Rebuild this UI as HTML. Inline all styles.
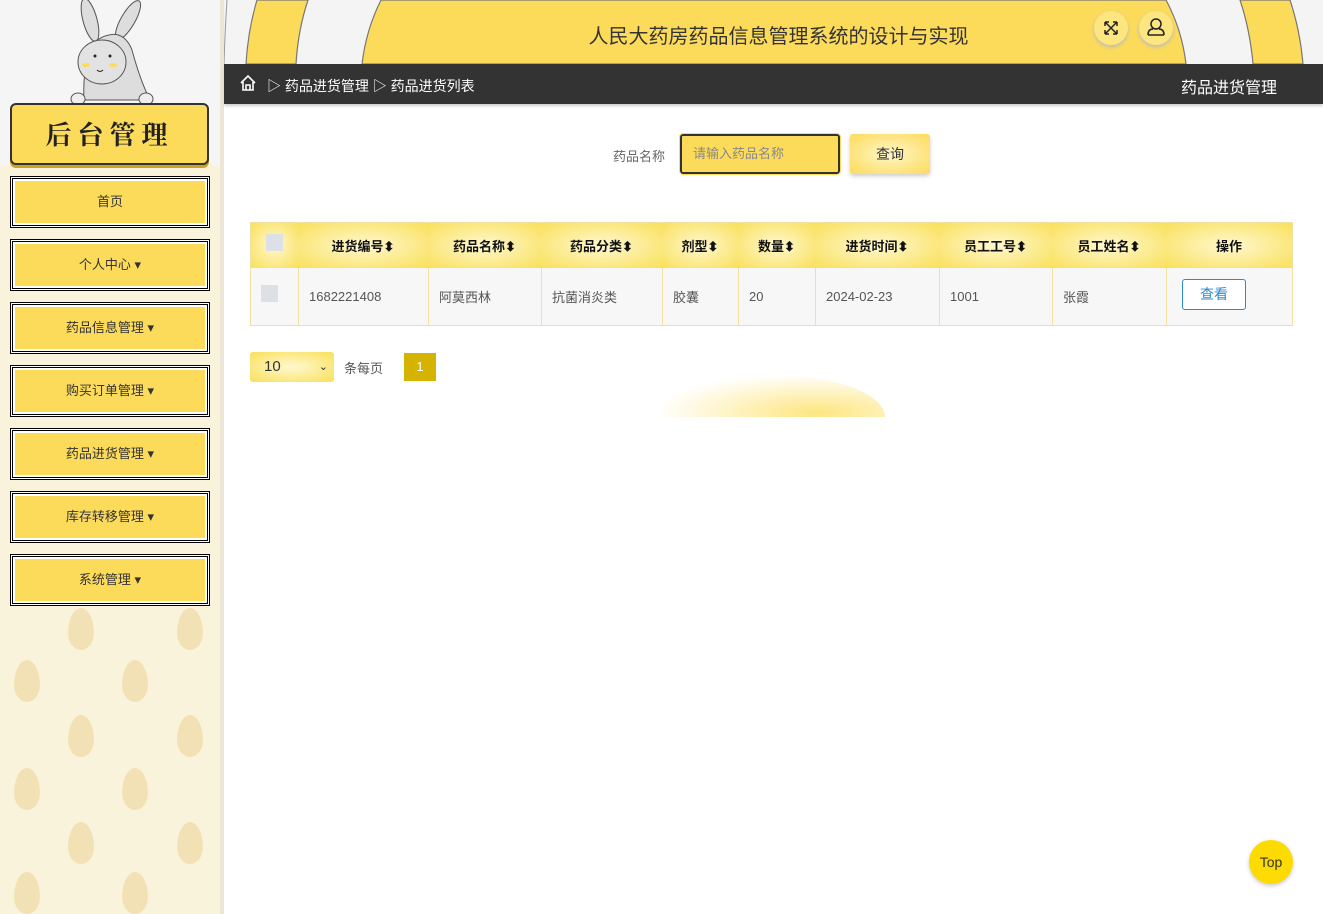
<!DOCTYPE html>
<html><head><meta charset="utf-8"><style>
*{box-sizing:border-box;margin:0;padding:0}
body{width:1323px;height:914px;overflow:hidden;background:#fff;font-family:"Liberation Sans","Noto Sans CJK SC",sans-serif;position:relative}
.side{position:absolute;left:0;top:0;width:220px;height:914px;background:#faf3dc;overflow:hidden}
.side .top{position:absolute;left:0;top:0;width:220px;height:166px;background:#f5f5f5}
.sbord{position:absolute;left:220px;top:0;width:4px;height:914px;background:#ebe6d6}
.leaf{position:absolute;width:26px;height:42px;border-radius:50% 50% 50% 50%/60% 60% 40% 40%;background:#f0dcaa;opacity:.8}
.sign{position:absolute;left:10px;top:103px;width:199px;height:62px;background:#fddb5a;border:2px solid #333;border-radius:6px;box-shadow:0 3px 0 #c9a227;text-align:center;font:bold 26px "Noto Serif CJK SC",serif;line-height:58px;letter-spacing:6px;color:#222}
.mi{position:absolute;left:10px;width:200px;height:52px;border:3px double #000;padding:2px;background:#fff}
.mi div{width:100%;height:100%;background:#fddb5a;text-align:center;line-height:42px;font-size:13px;color:#333}
.hdr{position:absolute;left:224px;top:0;width:1099px;height:64px;background:#f4f4f4;overflow:hidden}
.bar{position:absolute;left:224px;top:64px;width:1099px;height:40px;background:#333;color:#fff;font-size:14px;box-shadow:0 2px 3px #ccc}
.th,.td{position:absolute;top:0;height:100%;display:flex;align-items:center;font-size:13px}
.th{justify-content:center;font-weight:bold;color:#111}
.td{padding-left:10px;color:#555;border-left:1px solid #f0e1a0}
</style></head><body>
<div class="side">
<div class="top"></div>
<div class="leaf" style="left:68px;top:608px"></div><div class="leaf" style="left:177px;top:608px"></div>
<div class="leaf" style="left:14px;top:660px"></div><div class="leaf" style="left:122px;top:660px"></div>
<div class="leaf" style="left:68px;top:715px"></div><div class="leaf" style="left:177px;top:715px"></div>
<div class="leaf" style="left:14px;top:768px"></div><div class="leaf" style="left:122px;top:768px"></div>
<div class="leaf" style="left:68px;top:822px"></div><div class="leaf" style="left:177px;top:822px"></div>
<div class="leaf" style="left:14px;top:872px"></div><div class="leaf" style="left:122px;top:872px"></div>
<svg style="position:absolute;left:62px;top:0" width="100" height="110" viewBox="0 0 100 110">
<ellipse cx="28" cy="20" rx="7" ry="22" fill="#ddd" stroke="#555" transform="rotate(-15 28 20)"/>
<ellipse cx="66" cy="20" rx="7" ry="22" fill="#ddd" stroke="#555" transform="rotate(30 66 20)"/>
<path d="M22 100 Q20 60 35 40 Q60 25 70 50 Q78 80 88 100Z" fill="#ddd" stroke="#555"/>
<ellipse cx="40" cy="62" rx="24" ry="22" fill="#e2e2e2" stroke="#555"/>
<circle cx="33" cy="56" r="1.5" fill="#222"/><circle cx="48" cy="56" r="1.5" fill="#222"/>
<ellipse cx="24" cy="65" rx="4" ry="2" fill="#fddb5a"/><ellipse cx="51" cy="65" rx="4" ry="2" fill="#fddb5a"/>
<path d="M35 70 q3 3 6 0" stroke="#222" fill="none"/>
<ellipse cx="16" cy="99" rx="7" ry="6" fill="#eee" stroke="#555"/><ellipse cx="84" cy="99" rx="7" ry="6" fill="#eee" stroke="#555"/>
</svg>
<div class="sign">后台管理</div>
<div class="mi" style="top:176px"><div>首页</div></div>
<div class="mi" style="top:239px"><div>个人中心 ▾</div></div>
<div class="mi" style="top:302px"><div>药品信息管理 ▾</div></div>
<div class="mi" style="top:365px"><div>购买订单管理 ▾</div></div>
<div class="mi" style="top:428px"><div>药品进货管理 ▾</div></div>
<div class="mi" style="top:491px"><div>库存转移管理 ▾</div></div>
<div class="mi" style="top:554px"><div>系统管理 ▾</div></div>
</div>
<div class="sbord"></div>
<div class="hdr">
<svg width="1099" height="64" style="position:absolute;left:0;top:0">
<g fill="#fddb5a" stroke="#777" stroke-width="1.2">
<path d="M33 0 Q24 30 22 64 L72 64 Q74 30 84 0 Z"/>
<path d="M1016 0 Q1026 30 1029 64 L1079 64 Q1076 30 1066 0 Z"/>
<path d="M157 0 Q142 30 138 64 L962 64 Q958 30 942 0 Z"/>
</g>
<path d="M3 0 Q1 30 0 64" stroke="#999" fill="none"/>
</svg>
<div style="position:absolute;left:0;width:1099px;top:20px;text-align:center;font-size:20px;color:#333;padding-left:10px">人民大药房药品信息管理系统的设计与实现</div>
<div style="position:absolute;left:870px;top:11px;width:34px;height:34px;border-radius:50%;background:#fde680;box-shadow:0 2px 4px #bbb"><svg width="34" height="34"><path d="M11 11 L23 23 M23 11 L11 23 M11 11 h4 M11 11 v4 M23 11 h-4 M23 11 v4 M11 23 h4 M11 23 v-4 M23 23 h-4 M23 23 v-4" fill="none" stroke="#222" stroke-width="1.5"/></svg></div>
<div style="position:absolute;left:915px;top:11px;width:34px;height:34px;border-radius:50%;background:#fde680;box-shadow:0 2px 4px #bbb"><svg width="34" height="34"><circle cx="17" cy="13" r="5" fill="none" stroke="#222" stroke-width="1.5"/><path d="M9 24 q0-6 5-6 M25 24 q0-6-5-6 M9 24 h16" fill="none" stroke="#222" stroke-width="1.5"/></svg></div>
</div>
<div class="bar">
<svg style="position:absolute;left:15px;top:10px" width="18" height="18"><path d="M2 9 L9 2 L16 9 M4 8 V16 H14 V8 M7 16 V11 H11 V16" fill="none" stroke="#fff" stroke-width="1.6"/></svg>
<div style="position:absolute;left:43px;top:12px">▷ 药品进货管理 ▷ 药品进货列表</div>
<div style="position:absolute;right:46px;top:10px;font-size:16px">药品进货管理</div>
</div>
<div style="position:absolute;left:613px;top:146px;font-size:13px;color:#666">药品名称</div>
<div style="position:absolute;left:680px;top:134px;width:160px;height:40px;background:#fddb5a;border:2px solid #333;outline:1px solid #fddb5a;border-radius:3px;padding-left:11px;line-height:36px;font-size:13px;color:#888">请输入药品名称</div>
<div style="position:absolute;left:850px;top:134px;width:80px;height:40px;background:radial-gradient(#fff6c8,#fddb5a);box-shadow:0 2px 4px #ccc;border-radius:3px;text-align:center;line-height:40px;font-size:14px;color:#333">查询</div>
<div style="position:absolute;left:250px;top:222px;width:1043px;height:104px;border:1px solid #f0e1a0">
<div style="position:absolute;left:0;top:0;width:1041px;height:45px;background:#f9e05a">
<div class="th" style="left:0;width:47px;background:radial-gradient(#fff8d0,#f9e05a)"><span style="width:17px;height:17px;background:#dde0e6;margin-top:-6px"></span></div>
<div class="th" style="left:47px;width:130px;background:radial-gradient(#fff8d0,#f9e05a)">进货编号⬍</div>
<div class="th" style="left:177px;width:113px;background:radial-gradient(#fff8d0,#f9e05a)">药品名称⬍</div>
<div class="th" style="left:290px;width:121px;background:radial-gradient(#fff8d0,#f9e05a)">药品分类⬍</div>
<div class="th" style="left:411px;width:76px;background:radial-gradient(#fff8d0,#f9e05a)">剂型⬍</div>
<div class="th" style="left:487px;width:77px;background:radial-gradient(#fff8d0,#f9e05a)">数量⬍</div>
<div class="th" style="left:564px;width:124px;background:radial-gradient(#fff8d0,#f9e05a)">进货时间⬍</div>
<div class="th" style="left:688px;width:113px;background:radial-gradient(#fff8d0,#f9e05a)">员工工号⬍</div>
<div class="th" style="left:801px;width:114px;background:radial-gradient(#fff8d0,#f9e05a)">员工姓名⬍</div>
<div class="th" style="left:915px;width:126px;background:radial-gradient(#fff8d0,#f9e05a)">操作</div>
</div>
<div style="position:absolute;left:0;top:45px;width:1041px;height:57px;background:#f7f7f7">
<div class="td" style="left:0;width:47px;border:0"><span style="width:17px;height:17px;background:#dde0e6;margin-top:-6px"></span></div>
<div class="td" style="left:47px;width:130px">1682221408</div>
<div class="td" style="left:177px;width:113px">阿莫西林</div>
<div class="td" style="left:290px;width:121px">抗菌消炎类</div>
<div class="td" style="left:411px;width:76px">胶囊</div>
<div class="td" style="left:487px;width:77px">20</div>
<div class="td" style="left:564px;width:124px">2024-02-23</div>
<div class="td" style="left:688px;width:113px">1001</div>
<div class="td" style="left:801px;width:114px">张霞</div>
<div class="td" style="left:915px;width:126px;padding-left:15px"><span style="width:64px;height:31px;border:1px solid #2a8ad0;border-radius:3px;background:#fff;color:#2a8ad0;text-align:center;line-height:29px;font-size:14px;display:inline-block;margin-top:-4px">查看</span></div>
</div>
</div>
<div style="position:absolute;left:250px;top:352px;width:84px;height:30px;border-radius:3px;background:radial-gradient(#fff8d0,#f9e05a);font-size:15px;line-height:30px;padding-left:14px;color:#333">10<span style="position:absolute;right:6px;font-size:11px">⌄</span></div>
<div style="position:absolute;left:344px;top:358px;font-size:13px;color:#555">条每页</div>
<div style="position:absolute;left:404px;top:353px;width:32px;height:28px;background:#d4b400;color:#fff;text-align:center;line-height:28px;font-size:13px">1</div>
<div style="position:absolute;left:660px;top:375px;width:225px;height:42px;border-radius:50% 50% 0 0/100% 100% 0 0;background:radial-gradient(ellipse at 70% 90%,#fde680,rgba(255,240,180,0.3) 60%,transparent 75%)"></div>
<div style="position:absolute;left:1249px;top:840px;width:44px;height:44px;border-radius:50%;background:#fddb00;box-shadow:0 2px 4px #ccc;text-align:center;line-height:44px;font-size:14px;color:#333">Top</div>
</body></html>
